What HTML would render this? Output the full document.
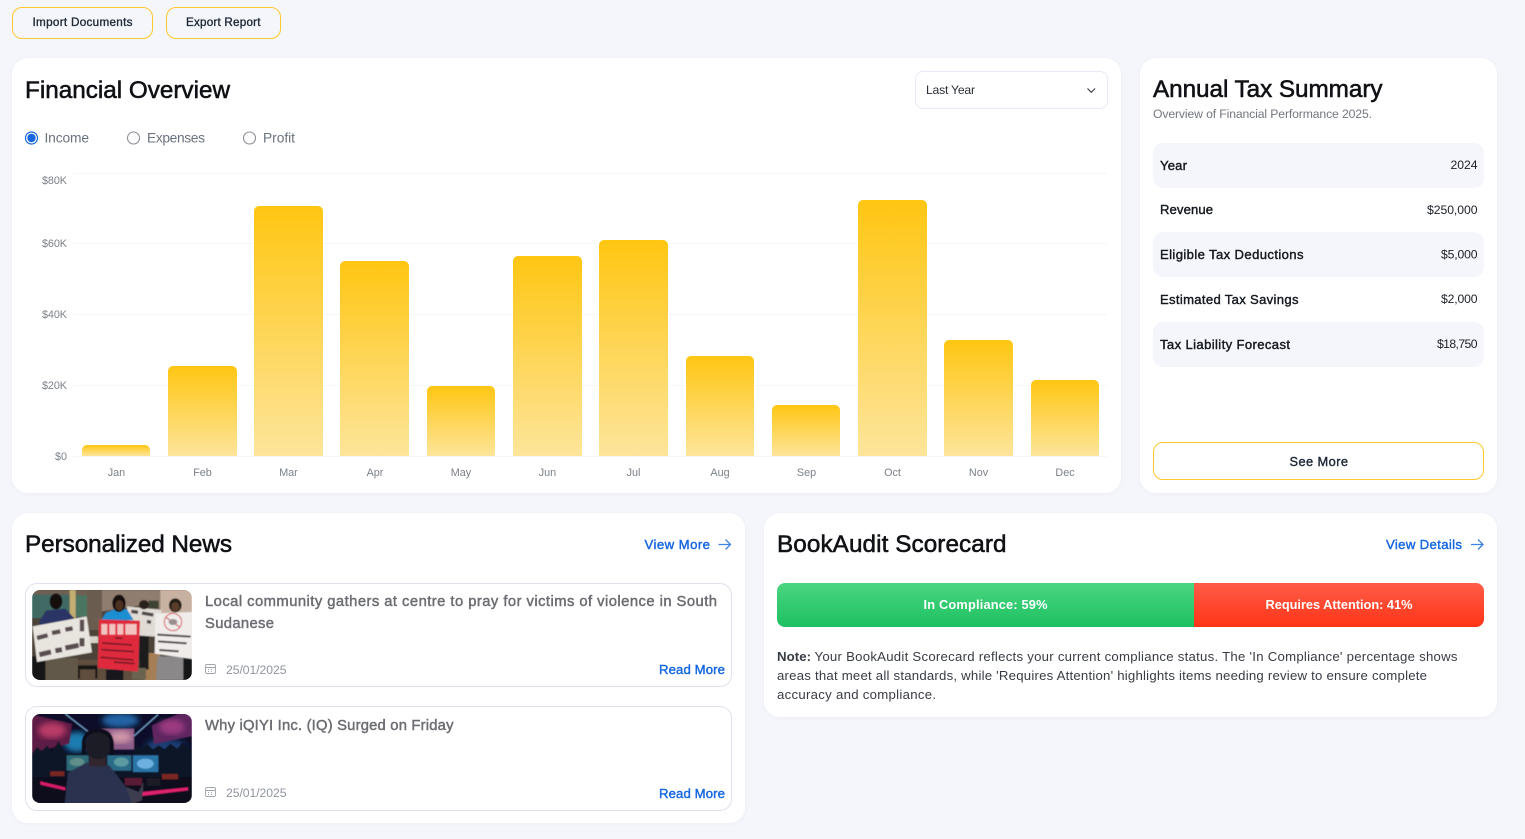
<!DOCTYPE html>
<html lang="en">
<head>
<meta charset="utf-8">
<title>Dashboard</title>
<style>
html,body{margin:0;padding:0;width:1525px;height:839px;overflow:hidden;background:#f4f6fb;font-family:"Liberation Sans",sans-serif}
.box{position:absolute;box-sizing:border-box}
.card{background:#fff;border-radius:16px;box-shadow:0 1px 6px rgba(40,50,90,.035)}
.btn{border:1.3px solid #ffc82e;border-radius:10px}
.row{background:#f4f6fb;border-radius:10px;left:1153px;width:331px;height:45px}
.item{left:25px;width:707px;border:1px solid #dfe2ec;border-radius:12px;background:#fff}
#ov{position:absolute;left:0;top:0}
text{font-family:"Liberation Sans",sans-serif}
.h{font-size:24.3px;fill:#0f1115;stroke:#0f1115;stroke-width:.55}
.b{font-size:11.7px;fill:#1f2937;stroke:#1f2937;stroke-width:.35}
.r{font-size:13.8px;fill:#6b7280}
.y{font-size:10.8px;fill:#7b8088}
.m{font-size:10.8px;fill:#7b8088}
.l{font-size:13.1px;fill:#14181f;stroke:#14181f;stroke-width:.4}
.v{font-size:12.2px;fill:#1b1f27}
.lnk{font-size:13.2px;fill:#1566e0;stroke:#1566e0;stroke-width:.4}
.t{font-size:14.8px;fill:#6b6d72;stroke:#6b6d72;stroke-width:.45}
.d{font-size:12.2px;fill:#8f94a0}
.n{font-size:13.2px;fill:#383c44}
.s{font-size:12.8px;fill:#fff;font-weight:bold}
</style>
</head>
<body>
<div class="box btn" style="left:12px;top:7px;width:141px;height:32px"></div>
<div class="box btn" style="left:166px;top:7px;width:115px;height:32px"></div>
<div class="box card" style="left:12px;top:58px;width:1109px;height:435px"></div>
<div class="box card" style="left:1140px;top:58px;width:357px;height:435px"></div>
<div class="box card" style="left:12px;top:513px;width:733px;height:310px"></div>
<div class="box card" style="left:764px;top:513px;width:733px;height:204px"></div>
<div class="box" style="left:915px;top:71px;width:193px;height:38px;border:1px solid #e8eaf3;border-radius:8px"></div>
<div class="box row" style="top:143px"></div>
<div class="box row" style="top:232px"></div>
<div class="box row" style="top:322px"></div>
<div class="box" style="left:1153px;top:442px;width:331px;height:38px;border:1px solid #ffc82e;border-radius:10px"></div>
<div class="box item" style="top:583px;height:104px"></div>
<div class="box item" style="top:706px;height:105px"></div>
<div class="box" style="left:777px;top:583px;width:417px;height:44px;border-radius:8px 0 0 8px;background:linear-gradient(#4ad680,#1dc062)"></div>
<div class="box" style="left:1194px;top:583px;width:290px;height:44px;border-radius:0 8px 8px 0;background:linear-gradient(#ff5c48,#ff3417)"></div>

<svg id="ov" width="1525" height="839" viewBox="0 0 1525 839" xmlns="http://www.w3.org/2000/svg">
<defs>
<linearGradient id="bar" x1="0" y1="0" x2="0" y2="1"><stop offset="0" stop-color="#ffc612"/><stop offset="1" stop-color="#fde59b"/></linearGradient>
<clipPath id="c1"><rect x="0" y="6" width="480" height="270" rx="24"/></clipPath>
<clipPath id="c2"><rect x="0" y="6" width="480" height="267" rx="24"/></clipPath>
<filter id="bl"><feGaussianBlur stdDeviation="1.2"/></filter>
<filter id="bl2"><feGaussianBlur stdDeviation="9"/></filter>
</defs>

<!-- top buttons -->
<text class="b" x="32.5" y="26" textLength="100">Import Documents</text>
<text class="b" x="186" y="26" textLength="74.5">Export Report</text>

<!-- financial overview -->
<text class="h" x="25" y="98" textLength="205">Financial Overview</text>
<text x="926" y="94" font-size="12.2" fill="#2a2e36" textLength="49">Last Year</text>
<path d="M1087.5 88.5l3.8 3.8 3.8-3.8" fill="none" stroke="#3a3e46" stroke-width="1.1"/>

<circle cx="31.5" cy="138" r="6" fill="#fff" stroke="#1566e0" stroke-width="1.2"/>
<circle cx="31.5" cy="138" r="4.2" fill="#1566e0"/>
<circle cx="133.5" cy="138" r="6" fill="#fff" stroke="#8b8e97" stroke-width="1.1"/>
<circle cx="249.5" cy="138" r="6" fill="#fff" stroke="#8b8e97" stroke-width="1.1"/>
<text class="r" x="44.5" y="142.5" textLength="44.5">Income</text>
<text class="r" x="147" y="142.5" textLength="58">Expenses</text>
<text class="r" x="263" y="142.5" textLength="32">Profit</text>

<g stroke="#f6f7f9" stroke-width="1">
<path d="M73 173.5H1108M73 243.5H1108M73 314.5H1108M73 385.5H1108M73 456.5H1108"/>
</g>
<g class="yl">
<text class="y" x="42" y="184" textLength="25">$80K</text>
<text class="y" x="42" y="247" textLength="25">$60K</text>
<text class="y" x="42" y="318" textLength="25">$40K</text>
<text class="y" x="42" y="389" textLength="25">$20K</text>
<text class="y" x="55" y="460" textLength="12">$0</text>
</g>
<g fill="url(#bar)">
<path d="M82 456v-6a5 5 0 0 1 5-5h58a5 5 0 0 1 5 5v6z"/>
<path d="M168 456V371a5 5 0 0 1 5-5h59a5 5 0 0 1 5 5v85z"/>
<path d="M254 456V211a5 5 0 0 1 5-5h59a5 5 0 0 1 5 5v245z"/>
<path d="M340 456V266a5 5 0 0 1 5-5h59a5 5 0 0 1 5 5v190z"/>
<path d="M427 456V391a5 5 0 0 1 5-5h58a5 5 0 0 1 5 5v65z"/>
<path d="M513 456V261a5 5 0 0 1 5-5h59a5 5 0 0 1 5 5v195z"/>
<path d="M599 456V245a5 5 0 0 1 5-5h59a5 5 0 0 1 5 5v211z"/>
<path d="M686 456V361a5 5 0 0 1 5-5h58a5 5 0 0 1 5 5v95z"/>
<path d="M772 456V410a5 5 0 0 1 5-5h58a5 5 0 0 1 5 5v46z"/>
<path d="M858 456V205a5 5 0 0 1 5-5h59a5 5 0 0 1 5 5v251z"/>
<path d="M944 456V345a5 5 0 0 1 5-5h59a5 5 0 0 1 5 5v111z"/>
<path d="M1031 456V385a5 5 0 0 1 5-5h58a5 5 0 0 1 5 5v71z"/>
</g>
<g text-anchor="middle">
<text class="m" x="116.5" y="476">Jan</text>
<text class="m" x="202.5" y="476">Feb</text>
<text class="m" x="288.5" y="476">Mar</text>
<text class="m" x="375" y="476">Apr</text>
<text class="m" x="461" y="476">May</text>
<text class="m" x="547.5" y="476">Jun</text>
<text class="m" x="633.5" y="476">Jul</text>
<text class="m" x="720" y="476">Aug</text>
<text class="m" x="806.5" y="476">Sep</text>
<text class="m" x="892.5" y="476">Oct</text>
<text class="m" x="978.5" y="476">Nov</text>
<text class="m" x="1065" y="476">Dec</text>
</g>

<!-- annual tax -->
<text class="h" x="1153" y="97" textLength="229.5">Annual Tax Summary</text>
<text x="1153" y="118" font-size="12.2" fill="#73777f" textLength="219">Overview of Financial Performance 2025.</text>
<text class="l" x="1160" y="170" textLength="27">Year</text>
<text class="l" x="1160" y="214" textLength="53">Revenue</text>
<text class="l" x="1160" y="259" textLength="143.5">Eligible Tax Deductions</text>
<text class="l" x="1160" y="304" textLength="138.5">Estimated Tax Savings</text>
<text class="l" x="1160" y="349" textLength="130">Tax Liability Forecast</text>
<text class="v" x="1450.5" y="169" textLength="27">2024</text>
<text class="v" x="1427" y="214" textLength="50.5">$250,000</text>
<text class="v" x="1441" y="258.5" textLength="36.5">$5,000</text>
<text class="v" x="1441" y="303" textLength="36.5">$2,000</text>
<text class="v" x="1437" y="348" textLength="40.5">$18,750</text>
<text x="1289.5" y="466" font-size="12.8" fill="#1f2937" stroke="#1f2937" stroke-width=".4" textLength="58.5">See More</text>

<!-- news -->
<text class="h" x="25" y="552" textLength="207">Personalized News</text>
<text class="lnk" x="644.5" y="549" textLength="65.5">View More</text>
<path d="M718.5 544.5H730M725.5 539.5l5 5-5 5" fill="none" stroke="#3d82ea" stroke-width="1.3"/>

<g transform="translate(32 588) scale(.3333)" clip-path="url(#c1)">
<g filter="url(#bl)">
<rect x="0" y="0" width="480" height="280" fill="#4c4239"/>
<rect x="0" y="6" width="210" height="18" fill="#6e6152"/>
<rect x="0" y="20" width="112" height="70" fill="#3f6a63"/>
<rect x="130" y="22" width="35" height="65" fill="#4c7563"/>
<rect x="113" y="6" width="18" height="100" fill="#c4ae72"/>
<rect x="165" y="6" width="45" height="120" fill="#6a5d50"/>
<path d="M210 6H480V70L360 70 340 50 210 70z" fill="#8f7d70"/>
<rect x="385" y="6" width="95" height="70" fill="#c9b1a1"/>
<rect x="350" y="38" width="30" height="24" fill="#3e4230"/>
<rect x="172" y="145" width="26" height="20" fill="#d8d4cc"/>
<rect x="0" y="215" width="480" height="65" fill="#5e4e3c"/>
<rect x="335" y="195" width="50" height="85" fill="#a67e54"/>
<path d="M138 232H196V272H190V244H144V272H138z" fill="#141418"/>
<!-- left man -->
<path d="M22 100L42 68 100 62 128 92 130 120H22z" fill="#2b3565"/>
<ellipse cx="72" cy="40" rx="19" ry="24" fill="#17110e"/>
<rect x="42" y="210" width="95" height="70" fill="#62584a"/>
<rect x="0" y="205" width="40" height="75" fill="#151518"/>
<!-- back sign -->
<path d="M285 55L390 66 368 146 290 140z" fill="#e0dbd5"/>
<path d="M298 70l20 3M330 75l34 6M345 100l12 3" stroke="#4d4644" stroke-width="10" fill="none"/>
<ellipse cx="336" cy="50" rx="15" ry="14" fill="#2a221c"/>
<rect x="322" y="145" width="28" height="100" fill="#1e1e1c"/>
<rect x="300" y="240" width="42" height="35" fill="#6a6450"/>
<!-- centre woman -->
<path d="M205 100L222 74 255 62 285 64 305 96z" fill="#1c8ed2"/>
<ellipse cx="261" cy="46" rx="20" ry="26" fill="#150f0c"/>
<ellipse cx="262" cy="52" rx="12" ry="16" fill="#4d3024"/>
<rect x="222" y="245" width="52" height="32" fill="#12141e"/>
<!-- red sign -->
<path d="M201 94L324 98 318 251 197 240z" fill="#df2b3c"/>
<path d="M208 108h18v32h-18zM232 108h18v32h-18zM256 108h18v32h-18zM280 108h34v32h-34z" fill="#f2c3c0"/>
<path d="M250 150l22 1M210 165l90 6M208 185l98 6M206 208l98 8M246 222l62 5" stroke="#7a1a28" stroke-width="5" fill="none"/>
<!-- left sign -->
<path d="M2 115L164 85 180 193 15 222z" fill="#e8e4de"/>
<path d="M15 150l32-8M60 135l25-5M100 125l22-4M150 95v35" stroke="#5a4d50" stroke-width="13" fill="none"/>
<path d="M22 200l35-8M70 188l20-3M100 180l40-8M150 150v25" stroke="#5a4d50" stroke-width="15" fill="none"/>
<!-- right woman & sign -->
<ellipse cx="430" cy="52" rx="19" ry="21" fill="#241a15"/>
<ellipse cx="430" cy="56" rx="12" ry="14" fill="#5a3c2c"/>
<path d="M376 205H454L470 276H372z" fill="#8a8888"/>
<rect x="454" y="205" width="26" height="71" fill="#121214"/>
<path d="M370 76L480 72V213L368 197z" fill="#efecea"/>
<circle cx="423" cy="102" r="26" fill="none" stroke="#d6565a" stroke-width="3"/>
<path d="M402 88l42 30" stroke="#c94c50" stroke-width="3"/>
<ellipse cx="423" cy="102" rx="13" ry="9" fill="#9a8d8d"/>
<path d="M376 140l100 6M378 160l86 6M382 186l58 4" stroke="#4f4a4a" stroke-width="6" fill="none"/>
</g>
</g>

<text class="t" x="205" y="606" textLength="512">Local community gathers at centre to pray for victims of violence in South</text>
<text class="t" x="205" y="628" textLength="69">Sudanese</text>
<g fill="none" stroke="#a0a4ad" stroke-width=".9">
<rect x="205.5" y="664.5" width="10" height="9" rx="1.5"/>
<path d="M205.5 667.5h10M208 669.5h1M211 669.5h1M208 671.5h1M211 671.5h1"/>
<rect x="205.5" y="787.5" width="10" height="9" rx="1.5"/>
<path d="M205.5 790.5h10M208 792.5h1M211 792.5h1M208 794.5h1M211 794.5h1"/>
</g>
<text class="d" x="226" y="674" textLength="60.5">25/01/2025</text>
<text class="lnk" x="659" y="674" textLength="66">Read More</text>

<g transform="translate(32 712) scale(.3333)" clip-path="url(#c2)">
<g filter="url(#bl)">
<rect x="0" y="0" width="480" height="280" fill="#0a0f2a"/>
<ellipse cx="135" cy="90" rx="40" ry="30" fill="#1f7db0" filter="url(#bl2)"/>
<ellipse cx="265" cy="25" rx="55" ry="22" fill="#2465a6" filter="url(#bl2)"/>
<ellipse cx="400" cy="105" rx="60" ry="25" fill="#1a3d75" filter="url(#bl2)"/>
<path d="M0 8L120 36 112 95 0 122z" fill="#5c1a44"/>
<ellipse cx="60" cy="55" rx="42" ry="24" fill="#b83a66" filter="url(#bl2)"/>
<path d="M360 40L440 6H480V72L366 96z" fill="#5e2560"/>
<ellipse cx="420" cy="45" rx="38" ry="22" fill="#9c3a80" filter="url(#bl2)"/>
<path d="M200 50H306V112H215z" fill="#8d5c88"/>
<ellipse cx="265" cy="75" rx="34" ry="18" fill="#d096a8" filter="url(#bl2)"/>
<path d="M100 6L170 60M378 8L306 72" stroke="#7fb0dc" stroke-width="3"/>
<path d="M0 125L15 105 30 118 45 100 60 118 80 88 100 125H300L315 100 330 112 345 96 362 112 380 100 398 112 415 95 435 110 452 92 480 118V205H0z" fill="#0c1328"/>
<rect x="0" y="195" width="480" height="85" fill="#08081a"/>
<rect x="104" y="130" width="66" height="46" fill="#2f6a78"/>
<ellipse cx="135" cy="150" rx="22" ry="12" fill="#5f8f88"/>
<rect x="226" y="130" width="72" height="46" fill="#2c6c88"/>
<ellipse cx="268" cy="150" rx="22" ry="14" fill="#5a9aa0"/>
<rect x="303" y="130" width="76" height="50" fill="#2a75a8"/>
<ellipse cx="340" cy="155" rx="25" ry="15" fill="#6cb0e0"/>
<rect x="55" y="178" width="42" height="14" fill="#7a2620"/>
<rect x="390" y="186" width="48" height="16" fill="#7a2622"/>
<path d="M25 208L100 226 100 235 25 218z" fill="#d81d6c"/>
<path d="M330 240L468 226 468 235 330 252z" fill="#e0246e"/>
<rect x="278" y="198" width="52" height="22" fill="#5a1f34"/>
<rect x="345" y="198" width="40" height="24" fill="#1a1a26"/>
<!-- person -->
<path d="M98 276L108 182 168 150 232 160 282 225 312 276z" fill="#2b3150"/>
<rect x="172" y="125" width="50" height="38" fill="#33262e"/>
<ellipse cx="198" cy="100" rx="38" ry="42" fill="#1a1a28"/>
<path d="M155 125V90Q160 55 200 55Q240 58 240 100V130" fill="none" stroke="#10101a" stroke-width="12"/>
<path d="M282 225L320 240 335 210 330 265 300 276z" fill="#3d3d50"/>
</g>
</g>

<text class="t" x="205" y="730" textLength="248.5">Why iQIYI Inc. (IQ) Surged on Friday</text>
<text class="d" x="226" y="797" textLength="60.5">25/01/2025</text>
<text class="lnk" x="659" y="798" textLength="66">Read More</text>

<!-- scorecard -->
<text class="h" x="777" y="552" textLength="229.5">BookAudit Scorecard</text>
<text class="lnk" x="1386" y="549" textLength="76">View Details</text>
<path d="M1471 544.5H1482.5M1478 539.5l5 5-5 5" fill="none" stroke="#3d82ea" stroke-width="1.3"/>
<text class="s" x="923.5" y="609" textLength="124">In Compliance: 59%</text>
<text class="s" x="1265.5" y="609" textLength="147">Requires Attention: 41%</text>
<text class="n" x="777" y="661" font-weight="bold" textLength="34">Note:</text>
<text class="n" x="814.5" y="661" textLength="643">Your BookAudit Scorecard reflects your current compliance status. The 'In Compliance' percentage shows</text>
<text class="n" x="777" y="680" textLength="650">areas that meet all standards, while 'Requires Attention' highlights items needing review to ensure complete</text>
<text class="n" x="777" y="699" textLength="159">accuracy and compliance.</text>
</svg>
</body>
</html>
